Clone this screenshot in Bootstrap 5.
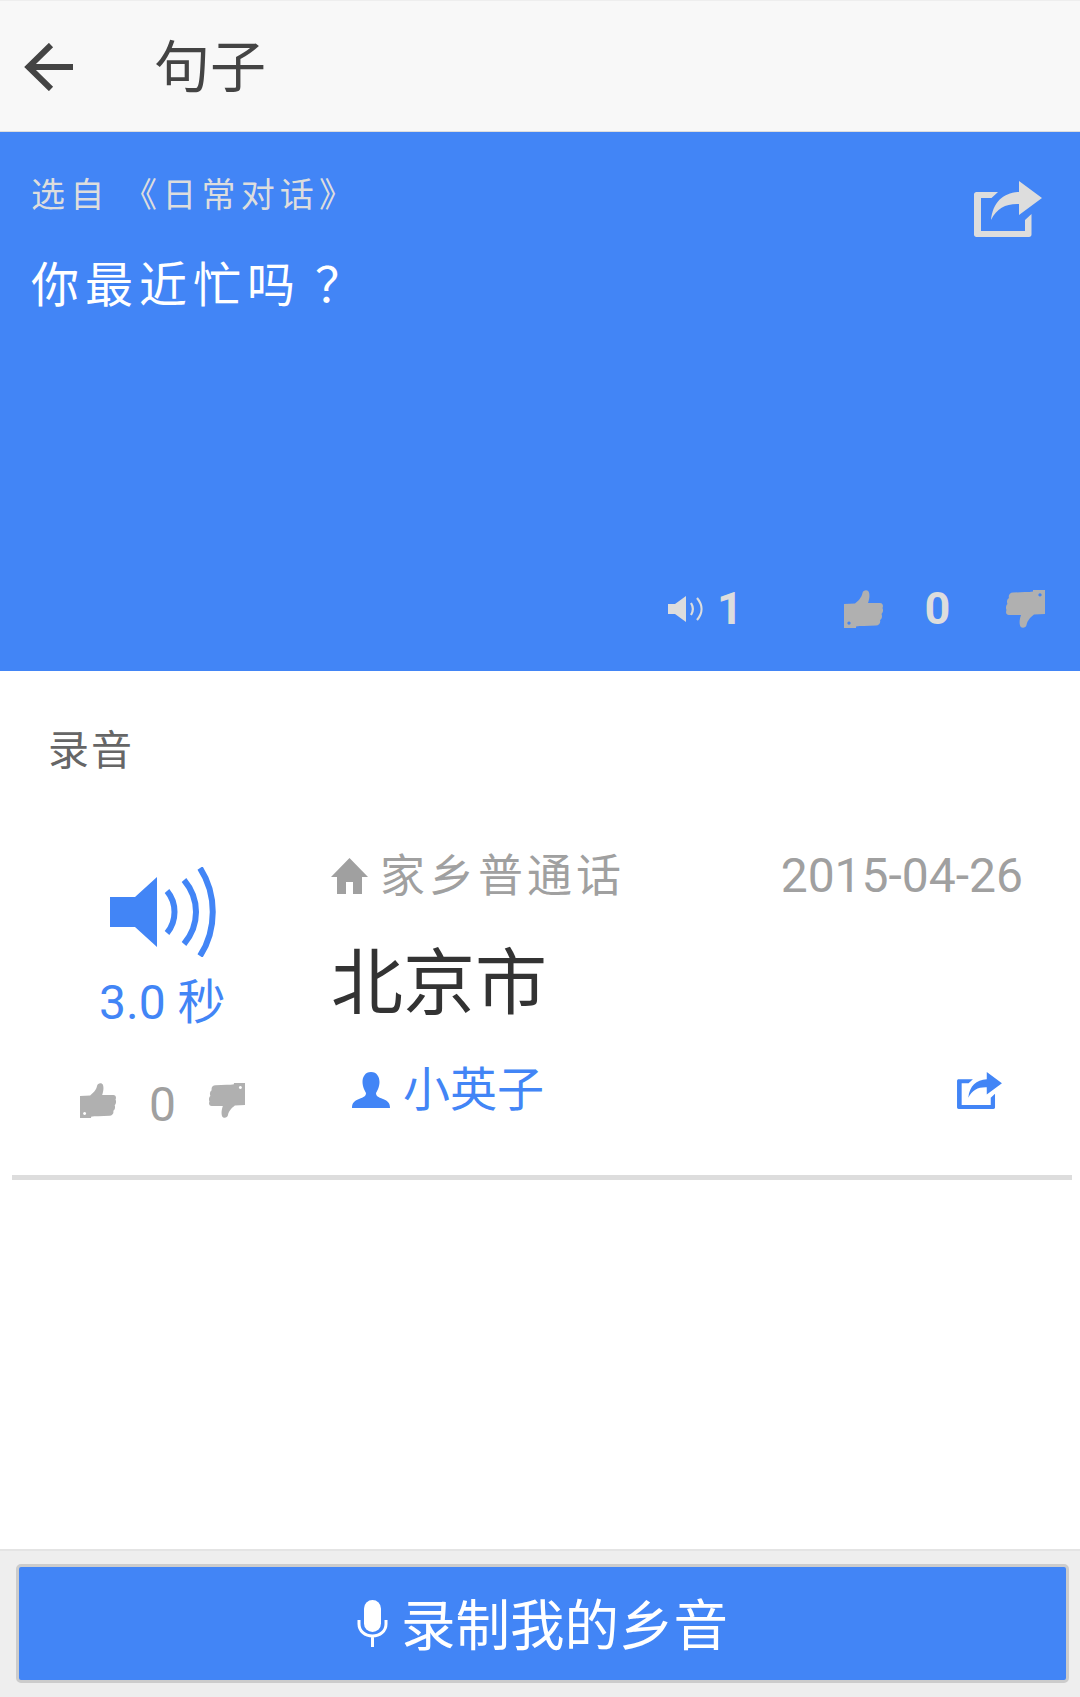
<!DOCTYPE html>
<html lang="zh-CN">
<head>
    <meta charset="UTF-8">
    <meta name="viewport" content="width=device-width, initial-scale=1.0">
    <title>句子</title>
    <link rel="stylesheet" href="https://cdn.jsdelivr.net/npm/bootstrap@5.3.0/dist/css/bootstrap.min.css">
    <style>
        body { font-family: Roboto, "Noto Sans CJK SC", sans-serif; background: #fff; }
        .page-wrap { height: 1697px; }

        /* barre du haut */
        .top-bar { height: 132px; background: #f8f8f8; border-top: 1px solid #eee; border-bottom: 1px solid #ddd; padding-left: 24px; color: #444; }
        .top-title { font-size: 56px; margin-left: 81px; line-height: 1; padding-top: 4px; }
        .ico-back { width: 49px; height: 48px; margin-top: 1px; }

        /* bloc bleu */
        .hero { height: 539px; background: #4285f6; padding: 0 38px 0 31px; color: #ddd; }
        .hero-source { font-size: 34px; letter-spacing: 5.200px; line-height: 1; margin-top: 46px; white-space: pre; }
        .hero-text { font-size: 48px; letter-spacing: 6px; line-height: 1; margin-top: 50px; color: #fff; }
        .hero-mark { margin-left: 14px; }
        .ico-share-lg { width: 68px; height: 56px; margin-top: 49px; }
        .hero-stats { margin: 0 -3px 40px 0; font-size: 45px; font-weight: 700; line-height: 1; }
        .ico-spk-sm { width: 35px; height: 26px; margin-right: 14px; }
        .ico-thumb { width: 39px; height: 38px; color: #b0b0b0; }
        .stat-listen { width: 152px; }
        .stat-zero { width: 123px; text-align: center; padding-right: 14px; }

        /* liste */
        .sec-label { font-size: 41px; letter-spacing: 2px; color: #666; line-height: 1; padding: 60px 0 0 48px; }
        .rec-item { margin: 0 8px 0 12px; height: 408px; border-bottom: 5px solid #ddd; }
        .rec-left { width: 300px; color: #4285f6; }
        .ico-spk-lg { width: 106px; height: 90px; margin: 95px 0 0 98px; }
        .rec-len { font-size: 48px; line-height: 1; margin-top: 22px; padding-left: 87px; white-space: nowrap; }
        .rec-votes { margin-top: 55px; padding-left: 68px; color: #a0a0a0; font-size: 48px; line-height: 1; }
        .rec-votes .ico-thumb { width: 36px; height: 37px; }
        .rec-votes span { width: 93px; text-align: center; margin-top: -1px; }
        .rec-right { padding: 0 49px 0 19px; }
        .rec-head { margin-top: 80px; color: #a0a0a0; line-height: 1; }
        .ico-home { width: 37px; height: 36px; }
        .rec-place { font-size: 45px; letter-spacing: 4px; margin-left: 12px; }
        .rec-date { font-size: 48px; }
        .rec-city { font-size: 72px; line-height: 1; color: #333; margin-top: 48px; }
        .rec-user { color: #4285f6; font-size: 47px; line-height: 1; margin-top: 46px; padding-left: 21px; padding-right: 21px; }
        .ico-user { width: 38px; height: 36px; margin-right: 13px; }
        .ico-share-sm { width: 45px; height: 37px; margin-top: 2px; }

        /* bas de page */
        .bottom-bar { height: 148px; background: #eee; border-top: 2px solid #e4e4e4; padding: 13px 11px 14px 16px; }
        .btn-record { height: 119px; background: #4285f6; border: 3px solid #ccc; border-radius: 5px; color: #fff; font-size: 54.500px; line-height: 1; }
        .btn-record:hover { background: #4285f6; color: #fff; border-color: #ccc; }
        .btn-record span { padding-top: 6px; }
        .ico-mic { width: 31px; height: 47px; margin-right: 13px; }
    </style>
</head>
<body>

    <!-- icones -->
    <svg width="0" height="0" class="d-block position-absolute">
        <symbol id="i-thumb" viewBox="0 0 39 38">
            <path fill="currentColor" fill-rule="evenodd" d="M0 14L11 13.500C14 11 17.500 8 18.500 3C19 0 24-1 25 2.500C26 6 25 10 24 13L36 13C39 13 39.500 16 38.500 18C39.500 20 39 23 37.500 24C38.500 26 38 29 36 30C37 33 35 35.500 32 35.500L20 36C17 36 14 36 12 36.500L12 38L0 38ZM5 31.500a1.600 1.600 0 1 0 .01 0Z"/>
        </symbol>
        <symbol id="i-share" viewBox="0 0 68 56">
            <path fill="currentColor" d="M2.500 11H24L17.500 17H7V50H51V39L57.500 33V53.500C57.500 55 56.500 56 55 56H2.500C1 56 0 55 0 53.500V13.500C0 12 1 11 2.500 11Z"/>
            <path fill="currentColor" d="M45 0L68 17L45 34V23C32 22.500 23 27 17 39C19 21 29 12 45 11Z"/>
        </symbol>
        <symbol id="i-speaker" viewBox="0 0 106 90">
            <path fill="currentColor" d="M0 30H25L47 10V80L25 60H0Z"/>
            <g fill="none" stroke="currentColor" stroke-width="6">
                <path d="M57 24C67 36 67 54 57 66"/>
                <path d="M74 13C90 32 90 58 74 77"/>
                <path d="M90 1C107 27 107 63 90 89"/>
            </g>
        </symbol>
    </svg>

    <div class="page-wrap d-flex flex-column">

        <div class="top-bar d-flex align-items-center">
            <svg class="ico-back" viewBox="0 0 49 48"><path fill="none" stroke="currentColor" stroke-width="6" d="M49 24H5M27 2L4.500 24L27 46"/></svg>
            <div class="top-title">句子</div>
        </div>

        <div class="hero d-flex flex-column justify-content-between">
            <div class="d-flex justify-content-between align-items-start">
                <div>
                    <div class="hero-source">选自 《日常对话》</div>
                    <div class="hero-text">你最近忙吗<span class="hero-mark">？</span></div>
                </div>
                <svg class="ico-share-lg"><use href="#i-share"/></svg>
            </div>
            <div class="hero-stats d-flex justify-content-end align-items-center">
                <div class="stat-listen d-flex align-items-center">
                    <svg class="ico-spk-sm" viewBox="0 0 35 26">
                        <path fill="currentColor" d="M0 8H7L18 0V26L7 18H0Z"/>
                        <path fill="none" stroke="currentColor" stroke-width="2.200" d="M23 7C25.500 11 25.500 15 23 19M29 2C35 9 35 17 29 24"/>
                    </svg>
                    <span>1</span>
                </div>
                <div class="d-flex align-items-center ps-4">
                    <svg class="ico-thumb"><use href="#i-thumb"/></svg>
                    <span class="stat-zero">0</span>
                    <svg class="ico-thumb" style="transform: rotate(180deg)"><use href="#i-thumb"/></svg>
                </div>
            </div>
        </div>

        <div class="sec-label">录音</div>

        <div class="rec-item d-flex">
            <div class="rec-left flex-shrink-0">
                <svg class="ico-spk-lg d-block"><use href="#i-speaker"/></svg>
                <div class="rec-len">3.0 秒</div>
                <div class="rec-votes d-flex align-items-start">
                    <svg class="ico-thumb"><use href="#i-thumb"/></svg>
                    <span>0</span>
                    <svg class="ico-thumb" style="transform: rotate(180deg)"><use href="#i-thumb"/></svg>
                </div>
            </div>
            <div class="rec-right flex-grow-1">
                <div class="rec-head d-flex justify-content-between align-items-center">
                    <div class="d-flex align-items-center">
                        <svg class="ico-home" viewBox="0 0 37 36"><path fill="currentColor" d="M18.500 0L37 19H31V36H22V24H15V36H6V19H0Z"/></svg>
                        <span class="rec-place">家乡普通话</span>
                    </div>
                    <span class="rec-date">2015-04-26</span>
                </div>
                <div class="rec-city">北京市</div>
                <div class="rec-user d-flex justify-content-between align-items-center">
                    <div class="d-flex align-items-center">
                        <svg class="ico-user" viewBox="0 0 38 36"><path fill="currentColor" d="M19 0C25 0 27.500 5 27.500 10C27.500 15 25 19 24 21C24 24 26 25 31 27C36 29 38 31 38 36H0C0 31 2 29 7 27C12 25 14 24 14 21C13 19 10.500 15 10.500 10C10.500 5 13 0 19 0Z"/></svg>
                        <span>小英子</span>
                    </div>
                    <svg class="ico-share-sm"><use href="#i-share"/></svg>
                </div>
            </div>
        </div>

        <div class="mt-auto bottom-bar">
            <button type="button" class="btn btn-record w-100 d-flex align-items-center justify-content-center">
                <svg class="ico-mic" viewBox="0 0 31 47">
                    <rect x="7" y="0" width="17" height="32" rx="8.500" fill="currentColor"/>
                    <path fill="none" stroke="currentColor" stroke-width="3" d="M2 20V24C2 31 8 36 15.500 36C23 36 29 31 29 24V20M15.500 36V47"/>
                </svg>
                <span>录制我的乡音</span>
            </button>
        </div>
    </div>

</body>
</html>
